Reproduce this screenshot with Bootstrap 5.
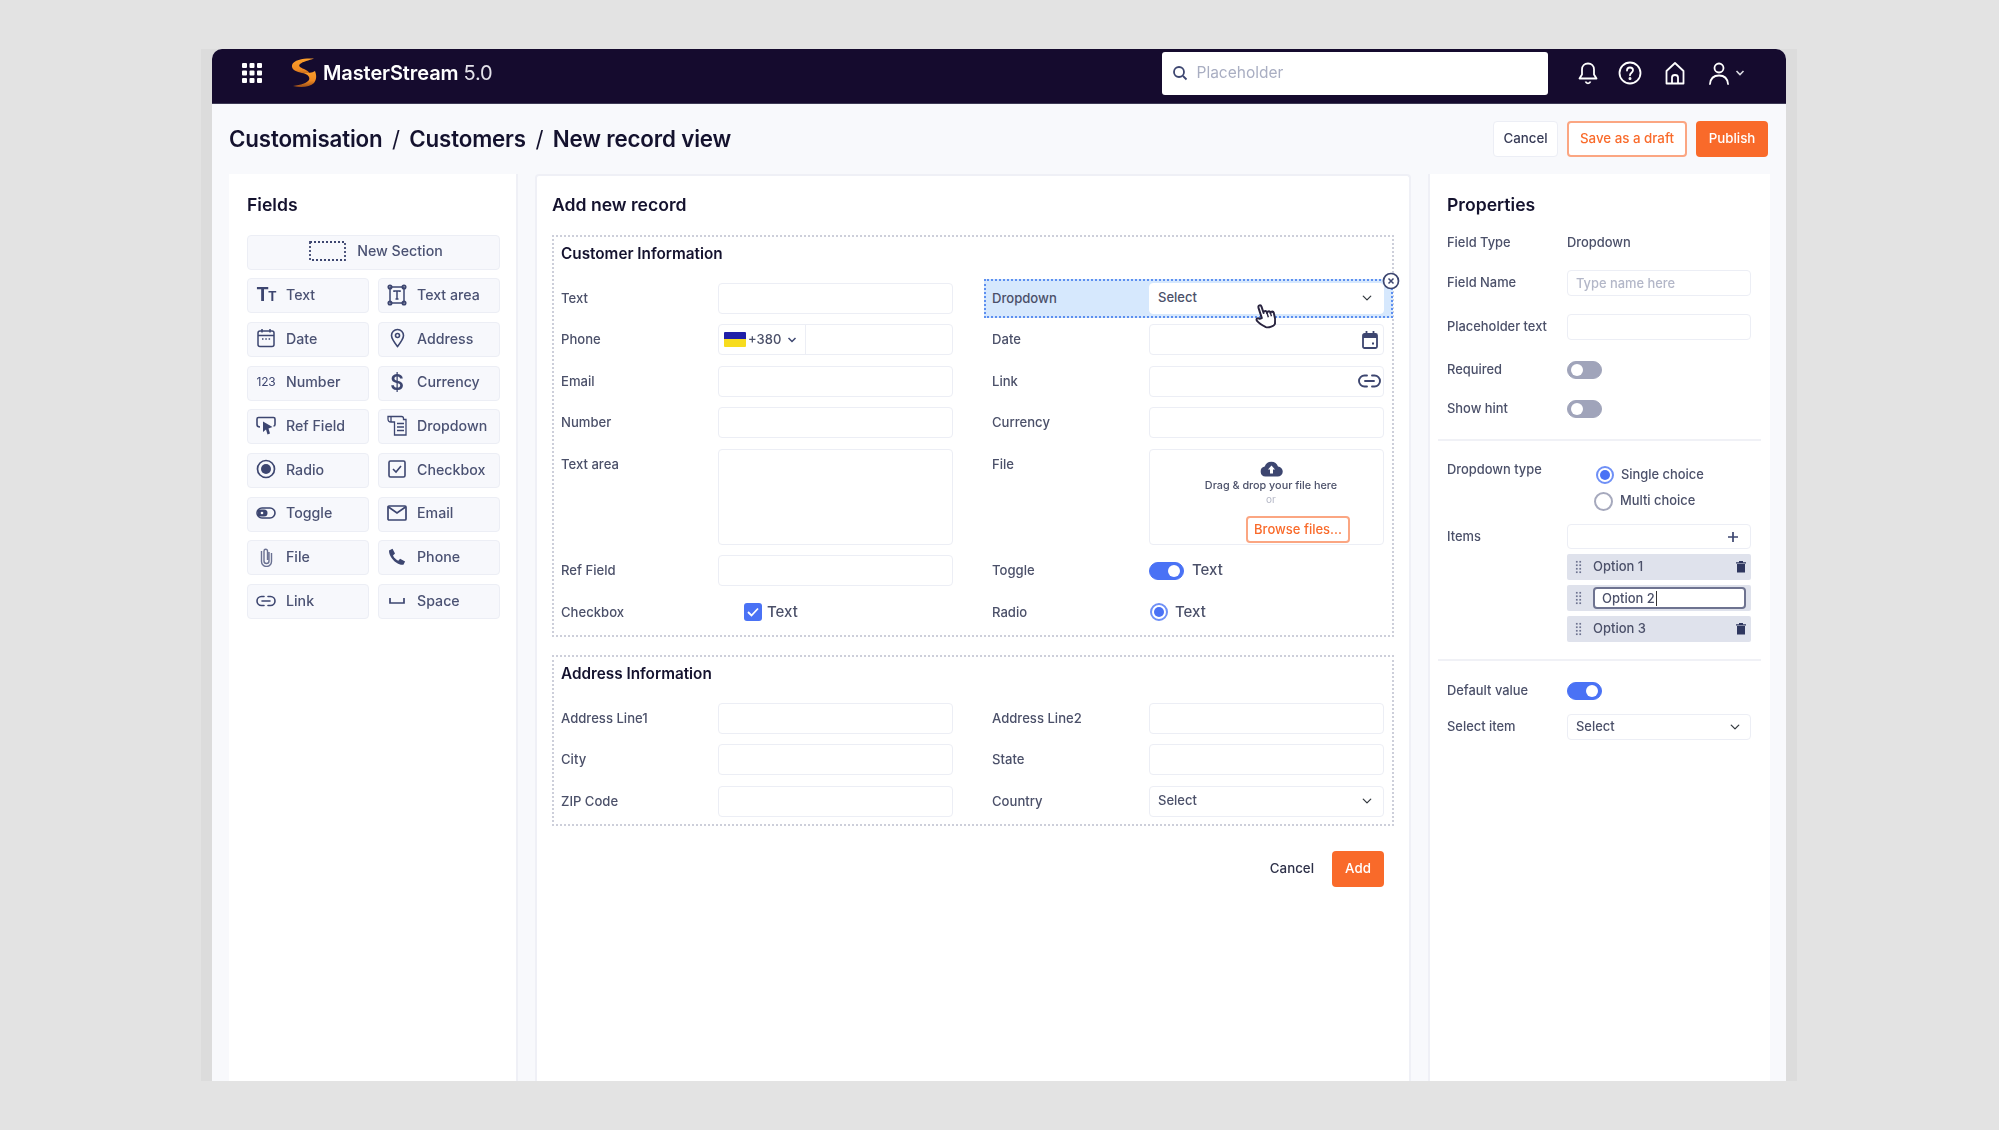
<!DOCTYPE html>
<html lang="en">
<head>
<meta charset="utf-8">
<title>MasterStream</title>
<link href="https://cdn.jsdelivr.net/npm/bootstrap@5.3.0/dist/css/bootstrap.min.css" rel="stylesheet">
<style>
html,body{height:100%;}
body{background:#e3e3e3;font-family:Inter,"Liberation Sans",sans-serif;color:#4b5069;font-size:13px;overflow:hidden;}
.frame{width:1596px;height:1032px;margin:49px 0 0 201px;padding:0 11px;background:#dcdcdc;}
.appwin{height:100%;background:#f8f9fc;border-radius:10px 10px 0 0;overflow:hidden;filter:blur(.6px);}
.topbar{height:55px;background:#150b2e;padding:0 41px 6px 29px;border-bottom:1px solid #3d3a55;flex-wrap:nowrap;}
.logo{margin-left:28px;}
.brand{color:#fff;font-size:20px;font-weight:600;letter-spacing:-.1px;margin:0 0 0 6px;padding:0;}
.brand span{font-weight:400;color:#e4e2ea;}
.searchbox{width:386px;height:43px;background:#fff;border-radius:3px;padding:0 10px;color:#a9aec2;font-size:15.5px;gap:9px;margin-right:30px;}
.navico{width:34px;display:flex;justify-content:center;margin-left:10.5px;color:#fff;}
.navico.qq{margin-left:14.5px;}
.bell{margin-left:-1px;}
.chev{margin-left:-1px;}
.crumbbar{height:70px;padding:0 18px 0 17px;}
.crumbs{color:#14122e;font-size:22.3px;font-weight:600;letter-spacing:-.15px;margin:0;}
.crumbs i{font-style:normal;font-weight:400;margin:0 4px;}
.tbtn{height:36px;padding:0;font-size:13.3px;font-weight:500;border-radius:4px;display:flex;align-items:center;justify-content:center;}
.tcancel{width:65px;background:#fff;border:1.5px solid #eceef5;color:#363a55;}
.tdraft{width:120px;background:#fff;border:2px solid #fba682;color:#f96a2a;}
.tpub{width:72px;background:#f96a2a;border:0;color:#fff;}
.panes{flex:1;padding:0 0 0 17px;min-height:0;}
.pane{background:#fff;height:100%;}
.pfields{width:289px;padding:18.5px 18px;border-right:2px solid #eff0f6;}
.pform{width:876px;margin:0 17px 0 17px;padding:16.5px 15px;border:2px solid #eff0f6;border-bottom:0;border-radius:4px 4px 0 0;}
.pprops{width:342px;padding:18.5px 18px 18px 17px;border-left:2px solid #eff0f6;}
.ptitle{color:#14122e;font-size:17.6px;font-weight:600;line-height:24px;margin:0;}
.fldgrid{display:grid;grid-template-columns:122px 122px;column-gap:9px;row-gap:8.7px;margin-top:18px;}
.fldbtn{height:35px;background:#f7f8fc;border:1.5px solid #eceef5;border-radius:4px;color:#4b5273;font-size:14.2px;font-weight:500;padding:0 0 2px 8px;display:flex;align-items:center;gap:10px;}
.fldbtn.wide{grid-column:span 2;justify-content:center;gap:11px;padding:0 0 2px 5px;}
.fico{width:20px;height:20px;flex:none;color:#3d4670;display:flex;align-items:center;justify-content:center;}
.fico svg{display:block;}
.tt{font-weight:700;font-size:19px;line-height:1;color:#3d4670;letter-spacing:-1px;}
.tt small{font-size:13px;font-weight:700;}
.n123{font-size:12px;font-weight:400;color:#3d4670;letter-spacing:-.2px;}
.dollar{font-size:21px;font-weight:600;color:#3d4670;line-height:1;}
.secgap{height:18px;}
.secbox{border:2px dotted #cdcfda;padding:7px 6px 7px 7px;}
.secbox+.secbox{margin-top:18px;}
.sectitle{color:#14122e;font-size:15.3px;font-weight:600;line-height:20px;margin:0 0 19px;}
.formgrid{display:grid;grid-template-columns:392px 392px;column-gap:39px;row-gap:10.5px;}
.frow{display:grid;grid-template-columns:157px 235px;align-items:start;}
.frow label{line-height:31px;font-size:13.1px;font-weight:500;color:#4b5069;margin:0;}
.ctl{height:31px;border:1.5px solid #eceef5;border-radius:4px;background-color:#fff;box-shadow:none;padding:0 8px;font-size:13px;color:#4b5069;font-weight:500;}
.form-select.ctl{background-position:right 10px center;background-size:12px 10px;}
.ctlarea{height:96px;resize:none;}
.phonewrap{display:flex;height:31px;border:1.5px solid #eceef5;border-radius:4px;overflow:hidden;background:#fff;}
.cc{width:87px;border-right:1.5px solid #eceef5;display:flex;align-items:center;padding-left:5px;gap:2px;font-size:13px;font-weight:500;color:#4b5069;}
.flag{width:22px;height:15px;background:linear-gradient(#2020a8 0 45%,#f7dc1e 45% 100%);border-radius:1px;flex:none;}
.iconctl{display:flex;align-items:center;justify-content:flex-end;padding:0 2px 0 0;color:#3d4670;}
.sel{margin:-4px -9px -4px -8px;padding:2px 7px 1px 6px;background:#d6e8fd;border:2px dotted #5d8ff0;position:relative;}
.sel .ctl{border-color:#fff;}
.closex{position:absolute;right:-9px;top:-9px;}
.handcur{position:absolute;left:268px;top:20px;transform:rotate(-18deg);}
.dropzone{height:96px;border:1.5px solid #eceef5;border-radius:4px;display:flex;flex-direction:column;align-items:center;padding:11px 0 0 9px;position:relative;}
.dropzone p{margin:0;font-size:10.8px;font-weight:500;color:#4b5069;line-height:14px;margin-top:2px;}
.dropzone em{font-style:normal;font-size:10px;line-height:13px;color:#b4b7c6;}
.browse{width:104px;height:27px;border:2px solid #fba682;border-radius:4px;color:#f96a2a;background:#fff;font-size:13px;font-weight:500;padding:0;align-self:flex-end;margin:10.5px 33px 0 0;}
.chkline{height:31px;display:flex;align-items:center;font-size:15px;font-weight:500;color:#4b5069;}
.cbx{width:18px;height:18px;background:#4a72f5;border-radius:3px;margin:0 5px 0 26px;display:flex;align-items:center;justify-content:center;}
.rad{width:18px;height:18px;border-radius:50%;border:2px solid #6f90f6;display:flex;align-items:center;justify-content:center;flex:none;background:#fff;}
.rad::after{content:"";width:10px;height:10px;border-radius:50%;background:#4a72f5;}
.rad.off{border-color:#a6a9bd;}
.rad.off::after{display:none;}
.swon,.swoff{width:35px;height:18px;border-radius:9px;background:#4a72f5;display:flex;align-items:center;justify-content:flex-end;padding:0 3px;flex:none;border:1px solid #4a72f5;}
.swon::after,.swoff::after{content:"";width:12px;height:12px;border-radius:50%;background:#fff;}
.swoff{background:#a0a4ba;border-color:#a0a4ba;justify-content:flex-start;}
.swwrap{height:31px;display:flex;align-items:center;gap:8px;font-size:15px;font-weight:500;color:#4b5069;}
.formacts{margin-top:25.5px;padding-right:10px;gap:18px;}
.plaincancel{font-size:13.3px;font-weight:500;color:#2d3048;background:none;border:0;padding:0;}
.addbtn{width:52px;height:36px;background:#f96a2a;color:#fff;border:0;border-radius:4px;font-size:13.3px;font-weight:500;padding:0;}
.prow{display:grid;grid-template-columns:120px 184px;align-items:center;min-height:26px;font-size:12.9px;font-weight:500;color:#4b5069;}
.pctl{height:26px;border:1.5px solid #eceef5;border-radius:4px;background-color:#fff;padding:0 8px;font-size:12.9px;box-shadow:none;color:#4b5069;font-weight:500;}
.pctl::placeholder{color:#b3b7c8;opacity:1;}
.form-select.pctl{background-position:right 9px center;background-size:12px 10px;}
.rule{height:2px;background:#f0f1f6;margin:0 -9px;}
.radline{display:flex;align-items:center;gap:7px;height:26px;font-size:12.9px;font-weight:500;}
.optrow{height:26px;background:#dfe2ec;border-radius:2px;display:flex;align-items:center;padding:0 5px 0 8px;margin-top:5px;font-size:13px;font-weight:500;color:#4b5069;}
.grip{width:7px;height:14px;margin-right:11px;flex:none;background-image:radial-gradient(#6e7390 1px,transparent 1.2px);background-size:3.5px 3.5px;}
.optedit{flex:1;height:22px;border:2px solid #6e7390;border-radius:4px;background:#fff;padding:0 0 0 7px;font-size:13px;color:#4b5069;line-height:18px;font-weight:500;display:flex;align-items:center;}
.optedit b{width:1px;height:15px;background:#333;margin-left:1px;}
</style>
</head>
<body>
<div class="frame">
<div class="appwin d-flex flex-column">
  <nav class="navbar topbar d-flex align-items-center justify-content-start">
    <svg width="22" height="22" viewBox="0 0 22 22" fill="#fff" aria-hidden="true"><rect x="1" y="1" width="5" height="5" rx="1"/><rect x="8.5" y="1" width="5" height="5" rx="1"/><rect x="16" y="1" width="5" height="5" rx="1"/><rect x="1" y="8.500" width="5" height="5" rx="1"/><rect x="8.500" y="8.500" width="5" height="5" rx="1"/><rect x="16" y="8.500" width="5" height="5" rx="1"/><rect x="1" y="16" width="5" height="5" rx="1"/><rect x="8.500" y="16" width="5" height="5" rx="1"/><rect x="16" y="16" width="5" height="5" rx="1"/></svg>
    <svg class="logo" width="26" height="30" viewBox="0 0 26 30" aria-hidden="true"><defs><linearGradient id="lg" x1="0" y1="0" x2="0" y2="1"><stop offset="0" stop-color="#fb9f2c"/><stop offset=".6" stop-color="#f08a22"/><stop offset="1" stop-color="#9a4d18"/></linearGradient></defs><path d="M23 .5C14 0 3 1 1 7c-1 5 5 7 10 8 3 .5 6 2 8 4 1-4-2-6-6-8-4-1.500-6-3-4-5 3-2.500 9-3.500 14-5.500z" fill="url(#lg)"/><path d="M24 13c1.500 4 2 8-1 12-4 4-13 5-21 3 8-1 14-3 16-6 1.500-3-2-6-5-7 4 0 8 0 11-2z" fill="url(#lg)"/></svg>
    <div class="brand">MasterStream <span>5.0</span></div>
    <div class="searchbox d-flex align-items-center ms-auto">
      <svg width="16" height="16" viewBox="0 0 16 16" fill="none" stroke="#3d4670" stroke-width="1.800" aria-hidden="true"><circle cx="7" cy="7" r="5"/><path d="M11 11l3.500 3.500"/></svg>
      <span>Placeholder</span>
    </div>
    <svg class="bell" width="22" height="24" viewBox="0 0 22 24" fill="none" stroke="#fff" stroke-width="1.800" stroke-linejoin="round" aria-hidden="true"><path d="M11 2.500c-3.500 0-6 2.500-6 6v5l-2.500 4h17l-2.500-4v-5c0-3.500-2.500-6-6-6z"/><path d="M8.500 20.500c.5 1.200 1.300 1.800 2.500 1.800s2-.6 2.500-1.800"/></svg>
    <div class="navico qq"><svg width="24" height="24" viewBox="0 0 24 24" fill="none" stroke="#fff" stroke-width="1.800" stroke-linecap="round" aria-hidden="true"><circle cx="12" cy="12" r="10.500"/><path d="M9 9.500c0-1.800 1.300-3 3-3s3 1.200 3 2.800c0 2.400-3 2.600-3 5"/><circle cx="12" cy="17.500" r=".6" fill="#fff"/></svg></div>
    <div class="navico"><svg width="22" height="24" viewBox="0 0 22 24" fill="none" stroke="#fff" stroke-width="1.800" stroke-linejoin="round" aria-hidden="true"><path d="M11 2L2.500 10v12.500h17V10z"/><path d="M8 22.500v-6c0-1.500 1.300-2.500 3-2.500s3 1 3 2.500v6"/></svg></div>
    <div class="navico"><svg width="24" height="24" viewBox="0 0 24 24" fill="none" stroke="#fff" stroke-width="1.800" stroke-linecap="round" aria-hidden="true"><circle cx="12" cy="7" r="4.500"/><path d="M3 23c.5-5.500 4-8.500 9-8.500s8.500 3 9 8.500"/></svg></div>
    <svg class="chev" width="10" height="8" viewBox="0 0 10 8" fill="none" stroke="#d8d8e0" stroke-width="1.600" aria-hidden="true"><path d="M1.500 2l3.500 3.500L8.500 2"/></svg>
  </nav>

  <div class="crumbbar d-flex align-items-center">
    <h1 class="crumbs">Customisation <i>/</i> Customers <i>/</i> New record view</h1>
    <div class="d-flex ms-auto" style="gap:9px">
      <button class="btn tbtn tcancel" type="button">Cancel</button>
      <button class="btn tbtn tdraft" type="button">Save as a draft</button>
      <button class="btn tbtn tpub" type="button">Publish</button>
    </div>
  </div>

  <div class="panes d-flex">
    <aside class="pane pfields">
      <h2 class="ptitle">Fields</h2>
      <div class="fldgrid">
        <div class="fldbtn wide"><svg width="37" height="20" viewBox="0 0 37 20" fill="none" stroke="#3d4670" stroke-width="1.800" stroke-dasharray="2 2" aria-hidden="true"><rect x="1" y="1" width="35" height="18"/></svg>New Section</div>
        <div class="fldbtn"><span class="fico"><span class="tt">T<small>T</small></span></span>Text</div>
        <div class="fldbtn"><span class="fico"><svg width="20" height="22" viewBox="0 0 20 22" fill="none" stroke="#3d4670" stroke-width="1.500" aria-hidden="true"><rect x="3" y="3" width="14" height="16"/><circle cx="3" cy="3" r="1.800"/><circle cx="17" cy="3" r="1.800"/><circle cx="3" cy="19" r="1.800"/><circle cx="17" cy="19" r="1.800"/><path d="M7 8V7h6v1M10 7v8M8.500 15h3"/></svg></span>Text area</div>
        <div class="fldbtn"><span class="fico"><svg width="18" height="20" viewBox="0 0 18 20" fill="none" stroke="#3d4670" stroke-width="1.500" aria-hidden="true"><rect x="1" y="3" width="16" height="15.500" rx="2"/><path d="M1 7.500h16M5 1v3.500M13 1v3.500"/><path d="M5 11h1.500M8.300 11h1.500M11.600 11h1.500" stroke-width="1.300"/></svg></span>Date</div>
        <div class="fldbtn"><span class="fico"><svg width="15" height="20" viewBox="0 0 15 20" fill="none" stroke="#3d4670" stroke-width="1.600" aria-hidden="true"><path d="M7.500 18.500C4 14 1.500 10.800 1.500 7.500a6 6 0 0 1 12 0c0 3.300-2.500 6.500-6 11z"/><circle cx="7.500" cy="7.500" r="2"/></svg></span>Address</div>
        <div class="fldbtn"><span class="fico"><span class="n123">123</span></span>Number</div>
        <div class="fldbtn"><span class="fico"><span class="dollar">$</span></span>Currency</div>
        <div class="fldbtn"><span class="fico"><svg width="20" height="20" viewBox="0 0 20 20" fill="none" stroke="#3d4670" stroke-width="1.600" aria-hidden="true"><path d="M4 11C2 11 1 10 1 8.500V3c0-1 .7-1.500 1.500-1.500h15c1 0 1.500.5 1.500 1.500v5.500c0 1-.5 1.500-1.500 1.500"/><path d="M7 5.500l9.500 5.500-4 1.500 1.500 5-2.500 1-1.500-5-3 2.500z" fill="#3d4670" stroke="none"/></svg></span>Ref Field</div>
        <div class="fldbtn"><span class="fico"><svg width="20" height="21" viewBox="0 0 20 21" fill="none" stroke="#3d4670" stroke-width="1.300" aria-hidden="true"><path d="M1 1.500h13.500c1.500 0 2 1 2 2v1h2.500V20H7.500V7H4C2 7 1 6 1 4z"/><path d="M4 1.500V7M10 8.500h7M10 12h7M10 15.500h7"/></svg></span>Dropdown</div>
        <div class="fldbtn"><span class="fico"><svg width="20" height="20" viewBox="0 0 20 20" fill="none" stroke="#3d4670" stroke-width="1.700" aria-hidden="true"><circle cx="10" cy="10" r="8.500"/><circle cx="10" cy="10" r="5" fill="#3d4670" stroke="none"/></svg></span>Radio</div>
        <div class="fldbtn"><span class="fico"><svg width="18" height="18" viewBox="0 0 18 18" fill="none" stroke="#3d4670" stroke-width="1.600" aria-hidden="true"><rect x="1" y="1" width="16" height="16" rx="1.500"/><path d="M5 9l3 3 5-6"/></svg></span>Checkbox</div>
        <div class="fldbtn"><span class="fico"><svg width="20" height="12" viewBox="0 0 20 12" fill="none" stroke="#3d4670" stroke-width="1.600" aria-hidden="true"><rect x="1" y="1" width="18" height="10" rx="5" /><path d="M2 2.500h6a3.500 3.500 0 0 1 0 7H2z" fill="#3d4670" stroke="none"/><circle cx="6" cy="6" r="1.300" fill="#fff" stroke="none"/></svg></span>Toggle</div>
        <div class="fldbtn"><span class="fico"><svg width="20" height="16" viewBox="0 0 20 16" fill="none" stroke="#3d4670" stroke-width="1.700" aria-hidden="true"><rect x="1" y="1" width="18" height="14" rx="1"/><path d="M1.500 2l8.500 6 8.500-6"/></svg></span>Email</div>
        <div class="fldbtn"><span class="fico"><svg width="13" height="20" viewBox="0 0 13 20" fill="none" stroke="#6a7192" stroke-width="1.400" aria-hidden="true"><path d="M9 5v9a2.500 2.500 0 0 1-5 0V4a1.700 1.700 0 0 1 3.500 0v9"/><path d="M11.500 6v8.500a5 5 0 0 1-10 0V4"/></svg></span>File</div>
        <div class="fldbtn"><span class="fico"><svg width="18" height="18" viewBox="0 0 18 18" fill="#3d4670" aria-hidden="true"><path d="M1 2.500L4.500.8 7 5.500 5 7.500c1 2.300 2.800 4 5.300 5.300l1.800-2 5 2.600-1.700 3.400C9 17.500.8 9.500 1 2.500z"/></svg></span>Phone</div>
        <div class="fldbtn"><span class="fico"><svg width="20" height="12" viewBox="0 0 20 12" fill="none" stroke="#3d4670" stroke-width="1.600" stroke-linecap="round" aria-hidden="true"><path d="M8 1.500H5.500a4.500 4.500 0 0 0 0 9H8M12 1.500h2.500a4.500 4.500 0 0 1 0 9H12M6 6h8"/></svg></span>Link</div>
        <div class="fldbtn"><span class="fico"><svg width="16" height="8" viewBox="0 0 16 8" fill="none" stroke="#3d4670" stroke-width="1.700" aria-hidden="true"><path d="M1 1v5h14V1"/></svg></span>Space</div>
      </div>
    </aside>

    <main class="pane pform">
      <h2 class="ptitle">Add new record</h2>
      <div class="secgap"></div>
      <section class="secbox">
        <h3 class="sectitle">Customer Information</h3>
        <div class="formgrid">
          <div class="frow"><label>Text</label><input class="form-control ctl" type="text"></div>
          <div class="frow sel"><label>Dropdown</label><select class="form-select ctl"><option>Select</option></select>
            <svg class="closex" width="18" height="18" viewBox="0 0 18 18" fill="#fff" stroke="#3d4670" stroke-width="1.700" aria-hidden="true"><circle cx="9" cy="9" r="7.500"/><path d="M6.500 6.500l5 5M11.500 6.500l-5 5" stroke-width="1.500"/></svg>
            <svg class="handcur" width="26" height="31" viewBox="0 0 24 28" fill="#fff" stroke="#2a2540" stroke-width="1.800" stroke-linejoin="round" aria-hidden="true"><path d="M7 14V4c0-2.500 3-2.500 3 0v6c0-1.800 3-1.800 3 0v1c0-1.500 3-1.500 3 0v1c0-1.300 3-1.300 3 .5 0 4-.5 7-2 10-1 2-7 2-9 .5-2-2-5-5.500-6-8-.8-2 1.500-3 3-1z"/><path d="M13 11v4M16 12v3" fill="none" stroke-width="1.300"/></svg>
          </div>
          <div class="frow"><label>Phone</label><div class="phonewrap"><div class="cc"><span class="flag"></span><span>+380</span><svg class="ms-1" width="10" height="8" viewBox="0 0 10 8" fill="none" stroke="#3d4670" stroke-width="1.500" aria-hidden="true"><path d="M1.500 2l3.500 3.500L8.500 2"/></svg></div></div></div>
          <div class="frow"><label>Date</label><div class="ctl iconctl" style="padding-right:5px"><svg width="16" height="18" viewBox="0 0 16 18" fill="none" stroke="#3d4670" stroke-width="1.800" aria-hidden="true"><rect x="1" y="3" width="14" height="14" rx="1.500"/><path d="M1 5.500h14" stroke-width="3"/><path d="M4.500 0v3M11.500 0v3"/><rect x="10" y="11.500" width="2" height="2" fill="#3d4670" stroke="none"/></svg></div></div>
          <div class="frow"><label>Email</label><input class="form-control ctl" type="text"></div>
          <div class="frow"><label>Link</label><div class="ctl iconctl"><svg width="23" height="14" viewBox="0 0 23 14" fill="none" stroke="#3d4670" stroke-width="1.900" stroke-linecap="round" aria-hidden="true"><path d="M9 1.500H6.500a5.500 5.500 0 0 0 0 11H9M14 1.500h2.500a5.500 5.500 0 0 1 0 11H14M7 7h9"/></svg></div></div>
          <div class="frow"><label>Number</label><input class="form-control ctl" type="text"></div>
          <div class="frow"><label>Currency</label><input class="form-control ctl" type="text"></div>
          <div class="frow"><label>Text area</label><textarea class="form-control ctl ctlarea"></textarea></div>
          <div class="frow"><label>File</label>
            <div class="dropzone">
              <svg width="23" height="16" viewBox="0 0 23 16" aria-hidden="true"><path d="M5.500 15.500a5 5 0 0 1-.8-9.900A7 7 0 0 1 18 5.500a5 5 0 0 1-.5 10z" fill="#3d4670"/><path d="M11.500 4.500l3.500 4h-2v4h-3v-4H8z" fill="#fff"/></svg>
              <p>Drag &amp; drop your file here</p>
              <em>or</em>
              <button class="browse" type="button">Browse files...</button>
            </div>
          </div>
          <div class="frow"><label>Ref Field</label><input class="form-control ctl" type="text"></div>
          <div class="frow"><label>Toggle</label><div class="swwrap"><span class="swon"></span>Text</div></div>
          <div class="frow"><label>Checkbox</label><div class="chkline"><span class="cbx"><svg width="12" height="10" viewBox="0 0 12 10" fill="none" stroke="#fff" stroke-width="1.800" aria-hidden="true"><path d="M1 5l3.500 3.500L11 1.500"/></svg></span>Text</div></div>
          <div class="frow"><label>Radio</label><div class="chkline"><span class="rad" style="margin:0 7px 0 1px"></span>Text</div></div>
        </div>
      </section>
      <section class="secbox">
        <h3 class="sectitle">Address Information</h3>
        <div class="formgrid">
          <div class="frow"><label>Address Line1</label><input class="form-control ctl" type="text"></div>
          <div class="frow"><label>Address Line2</label><input class="form-control ctl" type="text"></div>
          <div class="frow"><label>City</label><input class="form-control ctl" type="text"></div>
          <div class="frow"><label>State</label><input class="form-control ctl" type="text"></div>
          <div class="frow"><label>ZIP Code</label><input class="form-control ctl" type="text"></div>
          <div class="frow"><label>Country</label><select class="form-select ctl"><option>Select</option></select></div>
        </div>
      </section>
      <div class="formacts d-flex justify-content-end align-items-center">
        <button class="plaincancel" type="button">Cancel</button>
        <button class="addbtn" type="button">Add</button>
      </div>
    </main>

    <aside class="pane pprops">
      <h2 class="ptitle" style="margin-bottom:13.5px">Properties</h2>
      <div class="prow"><span>Field Type</span><span>Dropdown</span></div>
      <div class="prow" style="margin-top:14px"><span>Field Name</span><input class="form-control pctl" placeholder="Type name here"></div>
      <div class="prow" style="margin-top:18px"><span>Placeholder text</span><input class="form-control pctl"></div>
      <div class="prow" style="margin-top:17px"><span>Required</span><span class="swoff"></span></div>
      <div class="prow" style="margin-top:13px"><span>Show hint</span><span class="swoff"></span></div>
      <div class="rule" style="margin-top:17px;margin-bottom:16px"></div>
      <div class="prow align-items-start">
        <span style="margin-top:3px">Dropdown type</span>
        <div style="padding-left:29px">
          <div class="radline" style="margin-top:5px"><span class="rad"></span>Single choice</div>
          <div class="radline"><span class="rad off" style="margin-left:-2px;width:19px;height:19px"></span>Multi choice</div>
        </div>
      </div>
      <div class="prow align-items-start" style="margin-top:10px">
        <span style="margin-top:3px">Items</span>
        <div>
          <div class="pctl d-flex align-items-center justify-content-end" style="height:25px;padding-right:11px"><svg width="12" height="12" viewBox="0 0 12 12" stroke="#3d4670" stroke-width="1.700" aria-hidden="true"><path d="M6 1v10M1 6h10"/></svg></div>
          <div class="optrow"><span class="grip"></span><span class="flex-grow-1">Option 1</span><svg width="10" height="12" viewBox="0 0 10 12" fill="#2f375f" aria-hidden="true"><path d="M1 3h8v8.500H1zM0 1.200h10V2.500H0zM3 0h4v1.200H3z"/></svg></div>
          <div class="optrow"><span class="grip"></span><div class="optedit">Option 2<b></b></div></div>
          <div class="optrow"><span class="grip"></span><span class="flex-grow-1">Option 3</span><svg width="10" height="12" viewBox="0 0 10 12" fill="#2f375f" aria-hidden="true"><path d="M1 3h8v8.500H1zM0 1.200h10V2.500H0zM3 0h4v1.200H3z"/></svg></div>
        </div>
      </div>
      <div class="rule" style="margin-top:16.5px;margin-bottom:17.5px"></div>
      <div class="prow"><span>Default value</span><span class="swon"></span></div>
      <div class="prow" style="margin-top:9.5px"><span>Select item</span><select class="form-select pctl"><option>Select</option></select></div>
    </aside>
  </div>
</div>
</div>
<script src="https://cdn.jsdelivr.net/npm/bootstrap@5.3.0/dist/js/bootstrap.bundle.min.js"></script>
</body>
</html>
